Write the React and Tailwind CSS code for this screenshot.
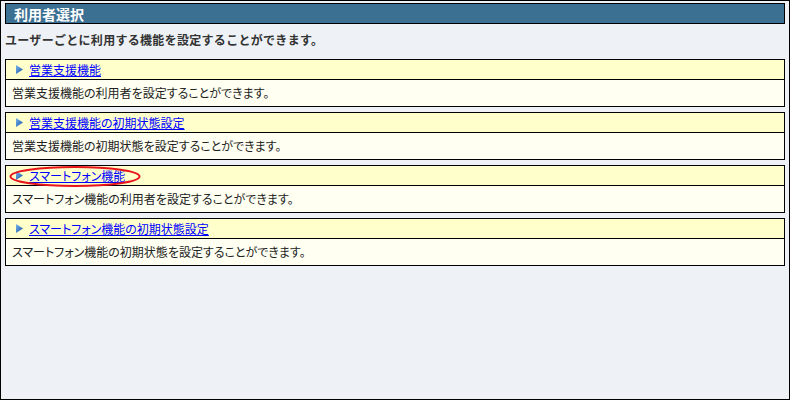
import React from "react";

const items = [
  {
    title: "営業支援機能",
    text: "営業支援機能の利用者を設定することができます。",
  },
  {
    title: "営業支援機能の初期状態設定",
    text: "営業支援機能の初期状態を設定することができます。",
  },
  {
    title: "スマートフォン機能",
    text: "スマートフォン機能の利用者を設定することができます。",
    marked: true,
  },
  {
    title: "スマートフォン機能の初期状態設定",
    text: "スマートフォン機能の初期状態を設定することができます。",
  },
];

const Arrow = ({ id }) => (
  <svg width="7" height="9" viewBox="0 0 7 9" className="shrink-0">
    <defs>
      <linearGradient id={id} x1="0" y1="0" x2="1" y2="1">
        <stop offset="0" stopColor="#7ab6ec" />
        <stop offset="1" stopColor="#1450a4" />
      </linearGradient>
    </defs>
    <polygon points="0,0 7,4.5 0,9" fill={`url(#${id})`} />
  </svg>
);

const FeatureCard = ({ item, index }) => {
  return (
    <div className="relative border border-black [font-feature-settings:'palt']">
      <div className="flex items-center h-[20px] bg-[#ffffcc] pl-[10px] gap-[6px] border-b border-black">
        <Arrow id={`arrow-${index}`} />
        <a href="#" className="text-[12px] leading-none text-[#0000ff] underline">
          {item.title}
        </a>
      </div>
      <div className="flex items-center h-[26px] bg-[#fffff2] pl-[6px] text-[12px] text-[#222]">
        {item.text}
      </div>
      {item.marked && (
        <svg
          width="132"
          height="21"
          viewBox="0 0 132 21"
          className="absolute left-[3px] top-0 pointer-events-none"
        >
          <ellipse cx="66" cy="10.5" rx="64.5" ry="9.5" fill="none" stroke="#e8141b" strokeWidth="2" />
        </svg>
      )}
    </div>
  );
};

const App = () => {
  return (
    <div
      className="w-[790px] h-[400px] bg-[#eef2f6] border border-black px-[4px] pt-[2px] flex flex-col"
      style={{ fontFamily: '"Noto Sans CJK JP", "Noto Sans", sans-serif' }}
    >
      <div className="h-[21px] bg-[#3c7092] border border-black flex items-center pl-[8px]">
        <h1 className="text-[14px] font-bold text-white leading-none">利用者選択</h1>
      </div>
      <p className="text-[12px] font-bold text-[#333] h-[35px] pt-[9px] leading-[14px] tracking-[0.3px]">
        ユーザーごとに利用する機能を設定することができます。
      </p>
      <div className="flex flex-col gap-[5px]">
        {items.map((item, i) => (
          <FeatureCard key={item.title} item={item} index={i} />
        ))}
      </div>
    </div>
  );
};

export default App;
